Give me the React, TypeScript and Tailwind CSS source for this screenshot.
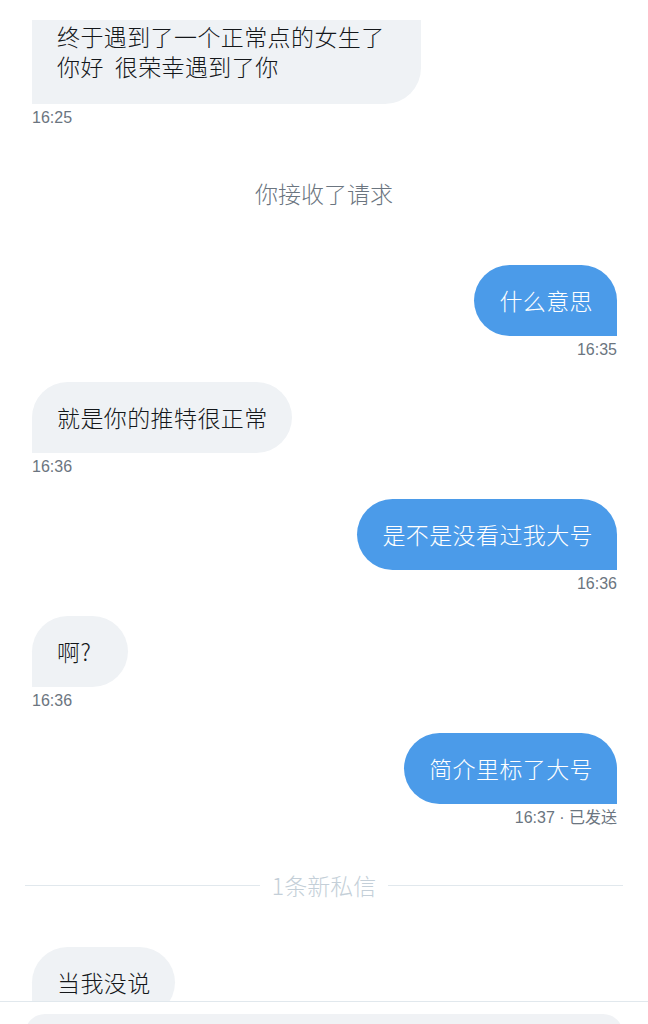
import React from "react";

interface IMessage {
  text: string;
  time: string;
  mine: boolean;
  width?: string;
}

const cjk = "font-['Noto_Sans_CJK_SC','Noto_Sans',sans-serif] font-light";
const latin = "font-['Liberation_Sans','Noto_Sans_CJK_SC',sans-serif]";

function Bubble({ message, first }: { message: IMessage; first?: boolean }) {
  return (
    <div className={`flex flex-col ${message.mine ? "items-end pr-[31px]" : "items-start pl-[32px]"} ${first ? "" : "mt-[23px]"}`}>
      <div
        className={`h-[71px] flex items-center pl-[25px] pr-[24px] pb-[2px] text-[23px] leading-[30px] tracking-[0.4px] rounded-[36px] ${cjk} ${
          message.width ?? ""
        } ${
          message.mine
            ? "bg-[#4b9be9] text-white rounded-br-none"
            : "bg-[#eff2f5] text-[#14171a] rounded-bl-none"
        }`}
      >
        {message.text}
      </div>
      <span className={`mt-[4px] text-[16px] leading-[19px] text-[#6b7580] ${latin}`}>{message.time}</span>
    </div>
  );
}

const messages: IMessage[] = [
  { text: "什么意思", time: "16:35", mine: true },
  { text: "就是你的推特很正常", time: "16:36", mine: false },
  { text: "是不是没看过我大号", time: "16:36", mine: true },
  { text: "啊?", time: "16:36", mine: false, width: "w-[96px]" },
  { text: "简介里标了大号", time: "16:37 · 已发送", mine: true },
];

export default function App() {
  return (
    <div className="relative w-[648px] h-[1024px] overflow-hidden bg-white flex flex-col pt-[20px]">
      <div className="flex flex-col items-start pl-[32px]">
        <div className={`w-[389px] bg-[#eff2f5] rounded-br-[36px] pl-[25px] pt-[1px] pb-[23px] text-[23px] leading-[30px] tracking-[0.4px] text-[#14171a] ${cjk}`}>
          <p>终于遇到了一个正常点的女生了</p>
          <p className="whitespace-pre">你好  很荣幸遇到了你</p>
        </div>
        <span className={`mt-[4px] text-[16px] leading-[19px] text-[#6b7580] ${latin}`}>16:25</span>
      </div>

      <p className={`mt-[51px] text-center text-[23px] leading-[30px] text-[#6b7580] ${cjk}`}>你接收了请求</p>

      <div className="mt-[57px] flex flex-col">
        {messages.map((m, i) => (
          <Bubble key={i} message={m} first={i === 0} />
        ))}
      </div>

      <div className="mt-[43px] flex items-center px-[25px] gap-[12px]">
        <div className="flex-1 h-px bg-[#e1e8ed]" />
        <span className={`text-[23px] leading-[30px] text-[#c4cfd8] ${cjk}`}>1条新私信</span>
        <div className="flex-1 h-px bg-[#e1e8ed]" />
      </div>

      <div className="mt-[47px] pl-[32px] flex">
        <div className={`h-[71px] flex items-center pl-[25px] pr-[24px] pb-[2px] text-[23px] leading-[30px] tracking-[0.4px] rounded-[36px] rounded-bl-none bg-[#eff2f5] text-[#14171a] ${cjk}`}>
          当我没说
        </div>
      </div>

      <div className="absolute left-0 right-0 bottom-0 h-[23px] bg-white border-t border-[#e1e8ed] px-[25px] pt-[12px]">
        <div className="h-[40px] rounded-[26px] bg-[#f0f2f5]" />
      </div>
    </div>
  );
}
